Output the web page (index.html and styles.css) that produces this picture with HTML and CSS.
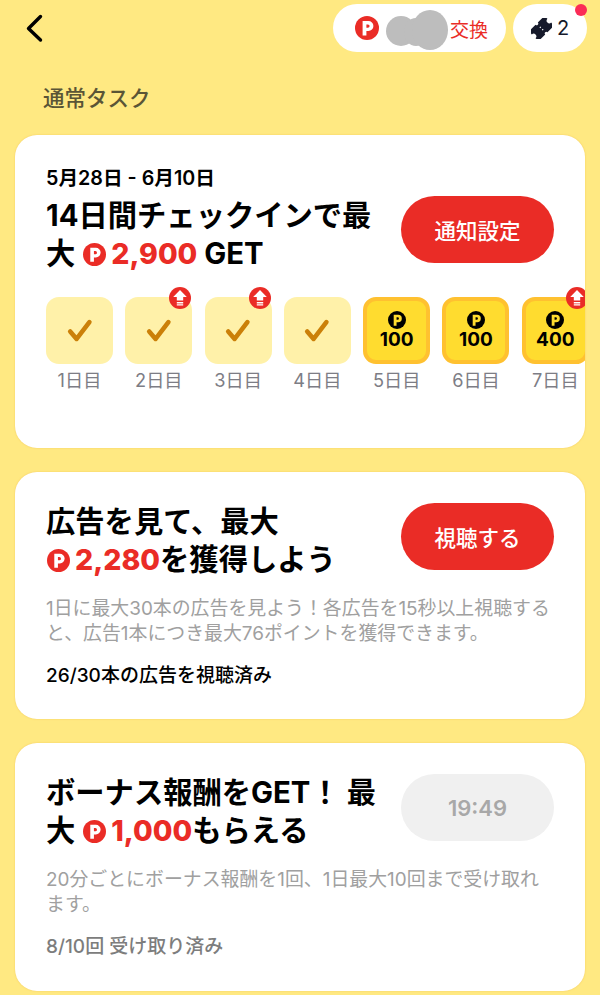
FILE: index.html
```html
<!DOCTYPE html>
<html lang="ja">
<head>
  <meta charset="UTF-8">
  <title>通常タスク</title>
  <meta name="viewport" content="width=device-width, initial-scale=1.0">
  <link rel="stylesheet" href="styles.css">
</head>
<body>

  <svg width="0" height="0" class="defs">
    <defs>
      <symbol id="coin" viewBox="0 0 24 24">
        <circle cx="12" cy="12" r="12" fill="currentColor"/>
        <path d="M7.6 19.5V5h5.8a5 5 0 0 1 0 10h-2v4.5z" fill="var(--coin-p, #fff)"/>
        <path d="M11.4 8.4v3.4h1.5a1.7 1.7 0 0 0 0-3.4z" fill="currentColor"/>
      </symbol>
      <symbol id="check" viewBox="0 0 28 28">
        <path d="M4.2 14.5l6.4 7.4L23.4 5.2" fill="none" stroke="#cb8009" stroke-width="4.6" stroke-linecap="round" stroke-linejoin="round"/>
      </symbol>
      <symbol id="up" viewBox="0 0 22 22">
        <circle cx="11" cy="11" r="11" fill="#ea2c26"/>
        <path d="M11 3l6.8 7h-3.6v3.6H7.8V10H4.2z" fill="#fff"/>
        <path d="M7.8 15h6.4v1.4H7.8zM7.8 17.3h6.4v1.3H7.8z" fill="#fff"/>
      </symbol>
    </defs>
  </svg>

  <div class="topbar">
    <svg class="back" width="20" height="30" viewBox="0 0 20 30">
      <path d="M16.5 3.5L4.5 15.5 16.5 27" fill="none" stroke="#000" stroke-width="3.4" stroke-linecap="round" stroke-linejoin="round"/>
    </svg>
    <div class="top-right">
      <div class="pill pill-points">
        <svg class="pill-coin"><use href="#coin"/></svg>
        <div class="blur">
          <span class="blob blob-a"></span>
          <span class="blob blob-b"></span>
          <span class="blob blob-c"></span>
        </div>
        <span class="exchange">交換</span>
      </div>
      <div class="pill pill-ticket">
        <svg width="21" height="21" viewBox="-10 -10 20 20">
          <g transform="rotate(-45)">
            <path d="M-10.5 -6.5H-1.5a1.5 1.5 0 0 0 3 0H10.5V-2.5a2.5 2.5 0 0 0 0 5V6.5H1.5a1.5 1.5 0 0 0-3 0H-10.5V2.5a2.5 2.5 0 0 0 0-5z" fill="#161a2b"/>
            <path d="M-.6 -2.2h1.2v1.2h-1.2zM-.6 1h1.2v1.2h-1.2z" fill="#fff"/>
          </g>
        </svg>
        <span>2</span>
        <span class="dot"></span>
      </div>
    </div>
  </div>

  <div class="section-title">通常タスク</div>

  <div class="card card-checkin">
    <div class="card-head">
      <div class="card-text">
        <div class="dates">5月28日 - 6月10日</div>
        <div class="title">14日間チェックインで最<br>大 <span class="amount"><svg class="amount-coin"><use href="#coin"/></svg>2,900</span> GET</div>
      </div>
      <div class="btn">通知設定</div>
    </div>
    <div class="days">
      <div class="day">
        <div class="tile done"><svg width="28" height="28"><use href="#check"/></svg></div>
        <div class="day-label">1日目</div>
      </div>
      <div class="day">
        <div class="tile done"><svg width="28" height="28"><use href="#check"/></svg></div>
        <svg class="badge"><use href="#up"/></svg>
        <div class="day-label">2日目</div>
      </div>
      <div class="day">
        <div class="tile done"><svg width="28" height="28"><use href="#check"/></svg></div>
        <svg class="badge"><use href="#up"/></svg>
        <div class="day-label">3日目</div>
      </div>
      <div class="day">
        <div class="tile done"><svg width="28" height="28"><use href="#check"/></svg></div>
        <div class="day-label">4日目</div>
      </div>
      <div class="day">
        <div class="tile prize"><svg class="prize-coin"><use href="#coin"/></svg><span>100</span></div>
        <div class="day-label">5日目</div>
      </div>
      <div class="day">
        <div class="tile prize"><svg class="prize-coin"><use href="#coin"/></svg><span>100</span></div>
        <div class="day-label">6日目</div>
      </div>
      <div class="day">
        <div class="tile prize"><svg class="prize-coin"><use href="#coin"/></svg><span>400</span></div>
        <svg class="badge"><use href="#up"/></svg>
        <div class="day-label">7日目</div>
      </div>
    </div>
  </div>

  <div class="card card-ads">
    <div class="card-head">
      <div class="card-text">
        <div class="title">広告を見て、最大<br><span class="amount"><svg class="amount-coin"><use href="#coin"/></svg>2,280</span>を獲得しよう</div>
      </div>
      <div class="btn">視聴する</div>
    </div>
    <p class="desc">1日に最大30本の広告を見よう！各広告を15秒以上視聴すると、広告1本につき最大76ポイントを獲得できます。</p>
    <div class="progress">26/30本の広告を視聴済み</div>
  </div>

  <div class="card card-bonus">
    <div class="card-head">
      <div class="card-text">
        <div class="title">ボーナス報酬をGET！ 最<br>大 <span class="amount"><svg class="amount-coin"><use href="#coin"/></svg>1,000</span>もらえる</div>
      </div>
      <div class="btn btn-off">19:49</div>
    </div>
    <p class="desc">20分ごとにボーナス報酬を1回、1日最大10回まで受け取れます。</p>
    <div class="progress progress-grey">8/10回 受け取り済み</div>
  </div>

</body>
</html>
```

FILE: styles.css
```css
html, body {
  height: 995px;
  overflow: hidden;
}

body {
  font-family: Inter, "Noto Sans CJK JP", sans-serif;
  background: #ffe982;
  margin: 0;
  padding: 0;
  color: #000;
}

.defs {
  display: block;
  height: 0;
}

.topbar {
  display: flex;
  justify-content: space-between;
  align-items: center;
  padding: 4px 13px 0 24px;
}

.top-right {
  display: flex;
  gap: 7px;
}

.pill {
  position: relative;
  display: flex;
  align-items: center;
  height: 48px;
  background: #fff;
  border-radius: 24px;
  box-sizing: border-box;
}

.pill-points {
  width: 173px;
  padding-left: 22px;
}

.pill-coin {
  width: 24px;
  height: 24px;
  color: #ea2c26;
}

.blur {
  position: relative;
  width: 71px;
  height: 48px;
}

.blob {
  position: absolute;
  background: #bdbdbd;
  border-radius: 50%;
}

.blob-a {
  left: 7px;
  top: 12px;
  width: 30px;
  height: 30px;
}

.blob-b {
  left: 25px;
  top: 14px;
  width: 24px;
  height: 28px;
}

.blob-c {
  left: 33px;
  top: 6px;
  width: 36px;
  height: 40px;
}

.exchange {
  color: #ea2c26;
  font-size: 19px;
}

.pill-ticket {
  width: 74px;
  justify-content: center;
  gap: 5px;
  font-size: 20px;
  color: #161a2b;
}

.dot {
  position: absolute;
  top: 0;
  right: 0;
  width: 12px;
  height: 12px;
  background: #fb2c56;
  border-radius: 50%;
}

.section-title {
  font-size: 21.5px;
  font-weight: 500;
  color: #5a5536;
  padding: 31px 0 0 43px;
  line-height: 31px;
  height: 52px;
}

.card {
  background: #fff;
  margin: 0 15px 24px;
  border-radius: 22px;
  box-shadow: 0 0 2px #f3c95c;
  overflow: hidden;
  box-sizing: border-box;
}

.card-checkin {
  height: 313px;
  padding-top: 30px;
}

.card-ads {
  height: 247px;
  padding-top: 31px;
}

.card-bonus {
  height: 248px;
  padding-top: 31px;
}

.card-head {
  display: flex;
  justify-content: space-between;
  align-items: flex-start;
  padding: 0 31px;
}

.card-checkin .card-head .btn {
  margin-top: 31px;
}

.card-text {
  width: 330px;
}

.dates {
  font-size: 19.7px;
  font-weight: 600;
  line-height: 27px;
  margin-bottom: 5px;
}

.title {
  font-size: 29.3px;
  font-weight: 700;
  line-height: 38px;
}

.amount {
  color: #ea2c26;
  white-space: nowrap;
  font-size: 28.5px;
  font-weight: 800;
}

.amount-coin {
  width: 23px;
  height: 23px;
  margin: 0 5px 0 1px;
  vertical-align: -2px;
  color: #ea2c26;
}

.btn {
  display: flex;
  align-items: center;
  justify-content: center;
  width: 153px;
  height: 67px;
  background: #ea2c26;
  color: #fff;
  font-size: 21.5px;
  font-weight: 500;
  border-radius: 34px;
  flex-shrink: 0;
}

.btn-off {
  background: #f0f0f0;
  color: #a8a8a8;
  font-size: 22px;
  font-weight: 600;
}

.days {
  display: flex;
  gap: 12.3px;
  padding: 24px 0 0 31px;
}

.day {
  position: relative;
  flex: 0 0 67px;
}

.tile {
  display: flex;
  flex-direction: column;
  align-items: center;
  justify-content: center;
  width: 67px;
  height: 67px;
  border-radius: 13px;
  box-sizing: border-box;
}

.done {
  background: #fff1a9;
}

.prize {
  --coin-p: #ffdc2f;
  background: #ffdc2f;
  border: 4px solid #ffc130;
  font-size: 19px;
  font-weight: 700;
  line-height: 20px;
}

.prize-coin {
  width: 18px;
  height: 18px;
  color: #000;
  margin-bottom: 1px;
}

.badge {
  position: absolute;
  top: -10px;
  right: 1px;
  width: 22px;
  height: 22px;
}

.day-label {
  text-align: center;
  font-size: 18.2px;
  color: #7d7d85;
  line-height: 24px;
  margin-top: 4px;
  font-weight: 400;
  white-space: nowrap;
}

.desc {
  margin: 17px 31px 0;
  font-size: 18.9px;
  line-height: 25px;
  color: #a0a0a0;
}

.progress {
  margin: 17px 31px 0;
  font-size: 19px;
  font-weight: 500;
  line-height: 25px;
}

.progress-grey {
  color: #7d7d7d;
}
```
